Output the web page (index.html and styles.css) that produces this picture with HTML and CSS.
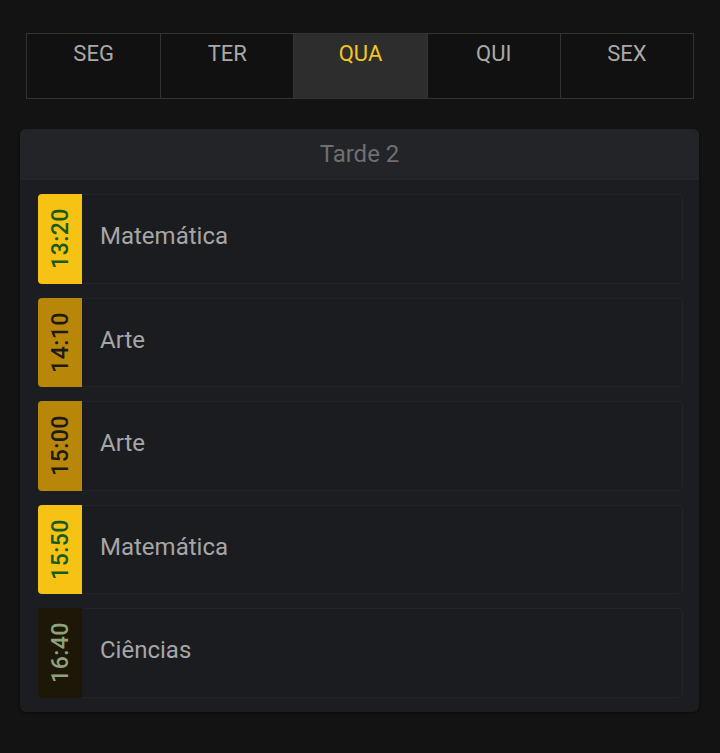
FILE: index.html
```html
<!DOCTYPE html>
<html lang="pt">
<head>
<meta charset="utf-8">
<link rel="stylesheet" href="styles.css">
</head>
<body>
<nav class="tabs">
  <div class="tab">SEG</div>
  <div class="tab">TER</div>
  <div class="tab active">QUA</div>
  <div class="tab">QUI</div>
  <div class="tab">SEX</div>
</nav>
<section class="card">
  <header class="card-head">Tarde 2</header>
  <div class="list">
    <div class="item"><div class="time t-bright"><span>13:20</span></div><div class="subject">Matemática</div></div>
    <div class="item"><div class="time t-gold"><span>14:10</span></div><div class="subject">Arte</div></div>
    <div class="item"><div class="time t-gold"><span>15:00</span></div><div class="subject">Arte</div></div>
    <div class="item"><div class="time t-bright"><span>15:50</span></div><div class="subject">Matemática</div></div>
    <div class="item"><div class="time t-dark"><span>16:40</span></div><div class="subject">Ciências</div></div>
  </div>
</section>
</body>
</html>
```
FILE: styles.css
```css
html, body {
  margin: 0;
  background: #131313;
  font-family: Roboto, "Liberation Sans", sans-serif;
}
body {
  padding: 33px 20px 0 20px;
  height: 753px;
  box-sizing: border-box;
}
.tabs {
  display: grid;
  grid-template-columns: repeat(5, 1fr);
  margin: 0 6px 0 6px;
  border: 1px solid #333;
  height: 66px;
  box-sizing: border-box;
}
.tab {
  color: #a9a9a9;
  font-size: 22px;
  text-align: center;
  padding-top: 7px;
  border-left: 1px solid #333;
  background: #111;
}
.tab:first-child { border-left: none; }
.tab.active {
  background: #2d2d2d;
  color: #f3c623;
}
.card {
  margin-top: 30px;
  background: #1c1d20;
  border-radius: 6px;
  width: 679px;
  box-shadow: 0 1px 3px rgba(0,0,0,0.5);
  overflow: hidden;
}
.card-head {
  height: 50px;
  background: #232427;
  border-bottom: 1px solid #26272a;
  color: #6f6f70;
  font-size: 24px;
  display: flex;
  align-items: center;
  justify-content: center;
}
.list {
  display: flex;
  flex-direction: column;
  gap: 14px;
  padding: 14px 16px 14px 18px;
}
.item {
  display: flex;
  height: 89.5px;
  background: #1b1c1f;
  border: 1px solid #232427;
  border-radius: 4px;
  box-sizing: border-box;
  align-items: center;
}
.time {
  width: 44px;
  align-self: stretch;
  margin: -1px 0 -1px -1px;
  border-radius: 4px 0 0 4px;
  display: flex;
  align-items: center;
  justify-content: center;
}
.time span {
  transform: rotate(-90deg);
  font-size: 23px;
  font-weight: 500;
  white-space: nowrap;
  letter-spacing: 0.5px;
}
.t-bright { background: #f6c314; color: #175a1c; }
.t-gold { background: #b8870a; color: #1c1a12; }
.t-dark { background: #1c1706; color: #8ea37c; }
.subject {
  margin-left: 18px;
  padding-bottom: 5px;
  color: #a6a6a6;
  font-size: 24px;
}
```
